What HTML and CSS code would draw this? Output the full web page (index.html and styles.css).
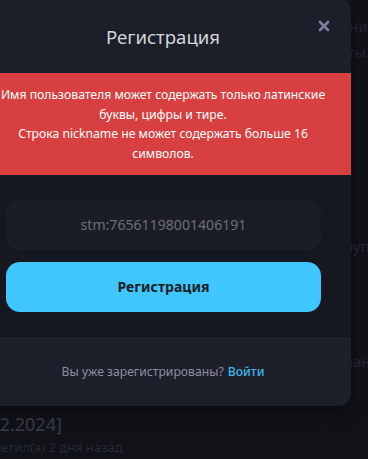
FILE: index.html
```html
<!DOCTYPE html>
<html lang="ru">
<head>
  <meta charset="UTF-8"/>
  <meta name="viewport" content="width=device-width,initial-scale=1"/>
  <title>Регистрация</title>
  <link rel="stylesheet" href="styles.css">
</head>
<body>

  <div class="page">
    <p class="bg-line l1">Сообщения об</p>
    <p class="bg-line l2">ошибках приняты.</p>
    <p class="bg-line l3">Поддержка группы</p>
    <p class="bg-line l4">Команда</p>
    <p class="bg-date">[12.12.2024]</p>
    <p class="bg-meta">Ответил(а) 2 дня назад</p>
  </div>

  <div class="modal">
    <div class="modal-head">
      <h2>Регистрация</h2>
      <button class="close" type="button" aria-label="Закрыть">
        <svg width="12" height="12" viewBox="0 0 12 12"><path d="M2 2L10 10M10 2L2 10" stroke="#7b7f9e" stroke-width="2.6" stroke-linecap="round"/></svg>
      </button>
    </div>
    <div class="error">
      Имя пользователя может содержать только латинские<br>буквы, цифры и тире.<br>
      Строка nickname не может содержать больше 16<br>символов.
    </div>
    <form class="modal-body">
      <input type="text" class="field" placeholder="stm:76561198001406191"/>
      <button type="submit" class="submit">Регистрация</button>
    </form>
    <div class="modal-foot">
      Вы уже зарегистрированы? <a href="#">Войти</a>
    </div>
  </div>

</body>
</html>
```

FILE: styles.css
```css
* { box-sizing:border-box; }
body {
  margin:0; background:#101218; font-family:"Noto Sans", "Open Sans", sans-serif;
  width:368px; height:459px; overflow:hidden; position:relative;
}
.page { padding:0; }
.bg-line { margin:0; color:#252830; font-size:15px; text-align:right; white-space:nowrap; }
.bg-line.l1 { padding-top:16px; margin-right:-30px; }
.bg-line.l2 { padding-top:6px; margin-right:-2px; }
.bg-line.l3 { padding-top:174px; margin-right:-22px; }
.bg-line.l4 { padding-top:95px; margin-right:-20px; }
.bg-date { margin:42px 0 0 -42px; color:#393c47; font-size:18px; line-height:22px; }
.bg-meta { margin:3px 0 0 -22px; color:#262932; font-size:13px; line-height:18px; }

.modal {
  position:absolute; left:-25px; top:-2px; width:376px;
  background:#151821; border-radius:13px; overflow:hidden;
  box-shadow:0 6px 16px rgba(0,0,0,0.35);
}
.modal-head {
  background:#1c1e2a; height:75px; display:flex; align-items:center; justify-content:center;
  position:relative;
}
.modal-head h2 { margin:2px 0 0; font-size:18.6px; font-weight:400; color:#d4d5da; }
.close {
  position:absolute; right:20px; top:21px; background:none; border:none; padding:0;
  width:14px; height:14px; display:flex; align-items:center; justify-content:center; cursor:pointer;
}
.error {
  background:#d83f40; color:#fff; text-align:center; font-size:12.2px; line-height:19.7px;
  padding:12px 8px 11px;
}
.modal-body { padding:25px 30px 25px 31px; display:flex; flex-direction:column; gap:12px; margin:0; }
.field {
  height:50px; border:none; border-radius:13px; background:#1b1d26; text-align:center;
  font-family:inherit; font-size:14.1px; color:#c8cad2; outline:none;
}
.field::placeholder { color:#6b6e78; }
.submit {
  height:50px; border:none; border-radius:14px; background:#3ec6fd; color:#1b1e27;
  font-family:inherit; font-size:14.1px; font-weight:700; cursor:pointer;
}
.modal-foot {
  background:#1d1f2b; height:69px; display:flex; align-items:center; justify-content:center;
  font-size:12.2px; color:#8a8ea1;
}
.modal-foot a { color:#3fb7ef; text-decoration:none; font-weight:500; margin-left:4px; }
```
